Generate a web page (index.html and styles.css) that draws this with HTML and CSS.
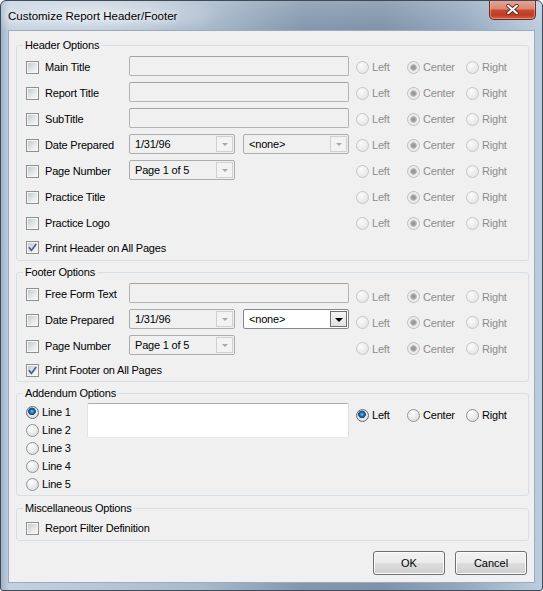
FILE: index.html
```html
<!DOCTYPE html>
<html>
<head>
<meta charset="utf-8">
<title>Customize Report Header/Footer</title>
<link rel="stylesheet" href="styles.css">
</head>
<body>
<div class="window">
  <div class="titlebar">
    <span class="title">Customize Report Header/Footer</span>
    <div class="close">
      <svg width="13" height="11" viewBox="0 0 13 11"><path d="M2.2 1.8 L10.8 9.2 M10.8 1.8 L2.2 9.2" stroke="#5a271c" stroke-width="3.8" stroke-linecap="round"/><path d="M2.2 1.8 L10.8 9.2 M10.8 1.8 L2.2 9.2" stroke="#ffffff" stroke-width="2.1" stroke-linecap="round"/></svg>
    </div>
  </div>
  <div class="client">
    <fieldset class="group header">
      <legend>Header Options</legend>
      <div class="row">
        <label class="check"><span class="cb"></span>Main Title</label>
        <div class="field"><div class="textbox off"></div></div>
        <div class="align off"><span class="opt"><span class="rb"></span>Left</span><span class="opt"><span class="rb on"></span>Center</span><span class="opt"><span class="rb"></span>Right</span></div>
      </div>
      <div class="row">
        <label class="check"><span class="cb"></span>Report Title</label>
        <div class="field"><div class="textbox off"></div></div>
        <div class="align off"><span class="opt"><span class="rb"></span>Left</span><span class="opt"><span class="rb on"></span>Center</span><span class="opt"><span class="rb"></span>Right</span></div>
      </div>
      <div class="row">
        <label class="check"><span class="cb"></span>SubTitle</label>
        <div class="field"><div class="textbox off"></div></div>
        <div class="align off"><span class="opt"><span class="rb"></span>Left</span><span class="opt"><span class="rb on"></span>Center</span><span class="opt"><span class="rb"></span>Right</span></div>
      </div>
      <div class="row">
        <label class="check"><span class="cb"></span>Date Prepared</label>
        <div class="field">
          <div class="combo off"><span class="val">1/31/96</span><span class="dd"><i></i></span></div>
          <div class="combo off"><span class="val">&lt;none&gt;</span><span class="dd"><i></i></span></div>
        </div>
        <div class="align off"><span class="opt"><span class="rb"></span>Left</span><span class="opt"><span class="rb on"></span>Center</span><span class="opt"><span class="rb"></span>Right</span></div>
      </div>
      <div class="row">
        <label class="check"><span class="cb"></span>Page Number</label>
        <div class="field">
          <div class="combo off"><span class="val">Page 1 of 5</span><span class="dd"><i></i></span></div>
        </div>
        <div class="align off"><span class="opt"><span class="rb"></span>Left</span><span class="opt"><span class="rb on"></span>Center</span><span class="opt"><span class="rb"></span>Right</span></div>
      </div>
      <div class="row">
        <label class="check"><span class="cb"></span>Practice Title</label>
        <div class="field"></div>
        <div class="align off"><span class="opt"><span class="rb"></span>Left</span><span class="opt"><span class="rb on"></span>Center</span><span class="opt"><span class="rb"></span>Right</span></div>
      </div>
      <div class="row">
        <label class="check"><span class="cb"></span>Practice Logo</label>
        <div class="field"></div>
        <div class="align off"><span class="opt"><span class="rb"></span>Left</span><span class="opt"><span class="rb on"></span>Center</span><span class="opt"><span class="rb"></span>Right</span></div>
      </div>
      <div class="print">
        <label class="check"><span class="cb"><svg width="9" height="9" viewBox="0 0 9 9"><path d="M0.9 4.3 L3.4 7.4 L8.2 0.9" fill="none" stroke="#4a5d8c" stroke-width="1.7"/></svg></span>Print Header on All Pages</label>
      </div>
    </fieldset>

    <fieldset class="group footer">
      <legend>Footer Options</legend>
      <div class="row">
        <label class="check"><span class="cb"></span>Free Form Text</label>
        <div class="field"><div class="textbox off"></div></div>
        <div class="align off"><span class="opt"><span class="rb"></span>Left</span><span class="opt"><span class="rb on"></span>Center</span><span class="opt"><span class="rb"></span>Right</span></div>
      </div>
      <div class="row">
        <label class="check"><span class="cb"></span>Date Prepared</label>
        <div class="field">
          <div class="combo off"><span class="val">1/31/96</span><span class="dd"><i></i></span></div>
          <div class="combo on"><span class="val">&lt;none&gt;</span><span class="dd"><i></i></span></div>
        </div>
        <div class="align off"><span class="opt"><span class="rb"></span>Left</span><span class="opt"><span class="rb on"></span>Center</span><span class="opt"><span class="rb"></span>Right</span></div>
      </div>
      <div class="row">
        <label class="check"><span class="cb"></span>Page Number</label>
        <div class="field">
          <div class="combo off"><span class="val">Page 1 of 5</span><span class="dd"><i></i></span></div>
        </div>
        <div class="align off"><span class="opt"><span class="rb"></span>Left</span><span class="opt"><span class="rb on"></span>Center</span><span class="opt"><span class="rb"></span>Right</span></div>
      </div>
      <div class="print short">
        <label class="check"><span class="cb"><svg width="9" height="9" viewBox="0 0 9 9"><path d="M0.9 4.3 L3.4 7.4 L8.2 0.9" fill="none" stroke="#4a5d8c" stroke-width="1.7"/></svg></span>Print Footer on All Pages</label>
      </div>
    </fieldset>

    <fieldset class="group addendum">
      <legend>Addendum Options</legend>
      <div class="add-body">
        <div class="lines">
          <span class="line"><span class="rb en sel"></span>Line 1</span>
          <span class="line"><span class="rb en"></span>Line 2</span>
          <span class="line"><span class="rb en"></span>Line 3</span>
          <span class="line"><span class="rb en"></span>Line 4</span>
          <span class="line"><span class="rb en"></span>Line 5</span>
        </div>
        <div class="memo"></div>
        <div class="align"><span class="opt"><span class="rb en sel"></span>Left</span><span class="opt"><span class="rb en"></span>Center</span><span class="opt"><span class="rb en"></span>Right</span></div>
      </div>
    </fieldset>

    <fieldset class="group misc">
      <legend>Miscellaneous Options</legend>
      <div class="misc-row">
        <label class="check"><span class="cb"></span>Report Filter Definition</label>
      </div>
    </fieldset>

    <div class="buttons">
      <button class="btn">OK</button>
      <button class="btn">Cancel</button>
    </div>
  </div>
</div>
</body>
</html>
```

FILE: styles.css
```css
* {
  box-sizing: border-box;
}

body {
  margin: 0;
  background: #ffffff;
  font-family: "Liberation Sans", Arial, sans-serif;
  font-size: 11px;
  color: #000;
}

.window {
  width: 543px;
  height: 591px;
  border: 1px solid #3f4b58;
  border-radius: 6px 6px 3px 3px;
  padding: 0 7px 7px;
  display: flex;
  flex-direction: column;
  overflow: hidden;
  background:
    radial-gradient(ellipse 130px 22px at 95px 14px, rgba(255, 255, 255, 0.55), rgba(255, 255, 255, 0) 100%),
    linear-gradient(180deg, rgba(255, 255, 255, 0.18) 0, rgba(255, 255, 255, 0) 30px),
    linear-gradient(90deg, #9fb2c7 0, #c3d1e0 8px, #bccbdb 60px, #a9bacc 200px, #8497ad 300px, #7e92a9 380px, #93a7bd 460px, #b3c4d6 520px, #bccde0 543px);
}

.titlebar {
  height: 29px;
  margin: 0 -7px;
  padding-left: 7px;
  display: flex;
  align-items: center;
}

.title {
  flex: 1;
  font-size: 11.5px;
  color: #000;
  text-shadow: 0 0 6px rgba(255, 255, 255, 0.9), 0 0 10px rgba(255, 255, 255, 0.7);
}

.close {
  align-self: flex-start;
  margin-top: -1px;
  margin-right: 6px;
  width: 47px;
  height: 20px;
  border: 1px solid #6a2a1e;
  border-top: none;
  border-radius: 0 0 5px 5px;
  background: linear-gradient(180deg, #e7a99a 0, #d98872 45%, #c64a2f 55%, #c13b21 80%, #d0654a 100%);
  box-shadow: inset 0 0 0 1px rgba(255, 200, 190, 0.45);
  display: flex;
  align-items: center;
  justify-content: center;
}

.close svg {
  display: block;
}

.client {
  flex: 1;
  background: #f0f0f0;
  border: 1px solid #9aabbe;
  padding: 7px 5px 0 7px;
}

.group {
  margin: 0;
  min-width: 0;
  border: 1px solid #d5dfe5;
  border-radius: 3px;
  padding: 2px 0 1px 9px;
}

.group legend {
  font-size: 11px;
  line-height: 14px;
  padding: 0 2px;
  margin-left: -3px;
  letter-spacing: -0.2px;
}

.footer {
  margin-top: 4px;
  padding: 2px 0 0 9px;
}

.addendum {
  margin-top: 4px;
  padding: 3px 0 2px 9px;
}

.misc {
  margin-top: 5px;
  padding: 3px 0 2px 9px;
}

.row {
  display: grid;
  grid-template-columns: 103px 220px auto;
  align-items: center;
  height: 26px;
}

.row .field {
  align-self: start;
  margin-top: 2px;
  height: 20px;
  display: flex;
  gap: 8px;
}

.print {
  height: 23px;
  display: flex;
  align-items: center;
}

.print.short {
  height: 22px;
}

.misc-row {
  height: 20px;
  display: flex;
  align-items: center;
}

.check {
  display: flex;
  align-items: center;
  gap: 6px;
  letter-spacing: -0.2px;
  white-space: nowrap;
}

.cb {
  width: 13px;
  height: 13px;
  flex: none;
  border: 1px solid #8e8f8f;
  padding: 1px;
  background: linear-gradient(135deg, #c4c8cd 0, #e4e6e8 55%, #f7f7f7 100%) content-box, #f6f6f6;
  display: block;
}

.cb svg {
  display: block;
  overflow: visible;
}

.textbox {
  width: 100%;
  height: 20px;
  border: 1px solid #b3b3b3;
  border-top-color: #a3a3a3;
  border-radius: 2px;
  background: #f0f0f0;
}

.combo {
  width: 106px;
  height: 20px;
  border: 1px solid #acacac;
  border-radius: 2px;
  background: #f0f0f0;
  padding: 1px 1px 1px 5px;
  display: flex;
  align-items: center;
  letter-spacing: -0.2px;
}

.combo .val {
  flex: 1;
  white-space: nowrap;
}

.combo .dd {
  width: 17px;
  height: 16px;
  border: 1px solid #d0d0d0;
  background: #f3f3f3;
  display: flex;
  align-items: center;
  justify-content: center;
}

.combo .dd i {
  display: block;
  width: 0;
  height: 0;
  border-left: 3px solid transparent;
  border-right: 3px solid transparent;
  border-top: 3px solid #a8a8a8;
  margin-top: 1px;
}

.combo.on {
  background: #ffffff;
  border-color: #828790;
}

.combo.on .dd {
  width: 17px;
  border-color: #6e6e6e;
  background: linear-gradient(180deg, #f4f4f4, #e2e2e2);
}

.combo.on .dd i {
  border-left-width: 4px;
  border-right-width: 4px;
  border-top: 4px solid #000;
}

.align {
  display: flex;
  align-items: center;
  margin-left: 7px;
  letter-spacing: -0.2px;
  white-space: nowrap;
}

.align.off {
  color: #8d8d8d;
}

.footer .align {
  margin-top: 5px;
}

.opt {
  display: flex;
  align-items: center;
  gap: 3px;
}

.opt:nth-child(1) {
  width: 51px;
}

.opt:nth-child(2) {
  width: 59px;
}

.rb {
  width: 13px;
  height: 13px;
  flex: none;
  border-radius: 50%;
  border: 1px solid #c6c6c6;
  background: radial-gradient(circle at 35% 30%, #fbfbfb 0, #ececec 55%, #dedede 100%);
  display: block;
}

.rb.on {
  background: radial-gradient(circle at 50% 50%, #8e8e8e 0, #a3a3a3 2px, #bdbdbd 3px, #e9e9e9 3.6px, #f3f3f3 100%);
  border-color: #bdbdbd;
}

.rb.en {
  border-color: #8f9297;
  background: radial-gradient(circle at 35% 30%, #ffffff 0, #e8e8e8 55%, #d4d6d9 100%);
}

.rb.en.sel {
  border-color: #5f6b78;
  background: radial-gradient(circle at 45% 40%, #7fc6f2 0, #2b82c6 1.6px, #134f88 3px, #2d4f6e 3.6px, #e6e8ea 4.1px, #d6d9dc 100%);
}

.add-body {
  display: grid;
  grid-template-columns: 61px 262px auto;
  align-items: start;
}

.lines {
  display: flex;
  flex-direction: column;
}

.line {
  height: 18px;
  display: flex;
  align-items: center;
  gap: 3px;
  letter-spacing: -0.2px;
}

.memo {
  height: 35px;
  background: #ffffff;
  border: 1px solid;
  border-color: #abadb3 #dbdfe6 #e3e9ef #e2e3ea;
  border-radius: 2px;
}

.add-body .align {
  margin-top: 5px;
  height: 14px;
}

.buttons {
  display: flex;
  justify-content: flex-end;
  gap: 10px;
  margin-top: 10px;
  padding-right: 2px;
}

.btn {
  width: 72px;
  height: 24px;
  border: 1px solid #707070;
  border-radius: 3px;
  background: linear-gradient(180deg, #f2f2f2 0, #ebebeb 48%, #dddddd 52%, #cfcfcf 100%);
  box-shadow: inset 0 0 0 1px #fcfcfc;
  font-family: "Liberation Sans", Arial, sans-serif;
  font-size: 11px;
  color: #000;
  padding: 0;
}
```
